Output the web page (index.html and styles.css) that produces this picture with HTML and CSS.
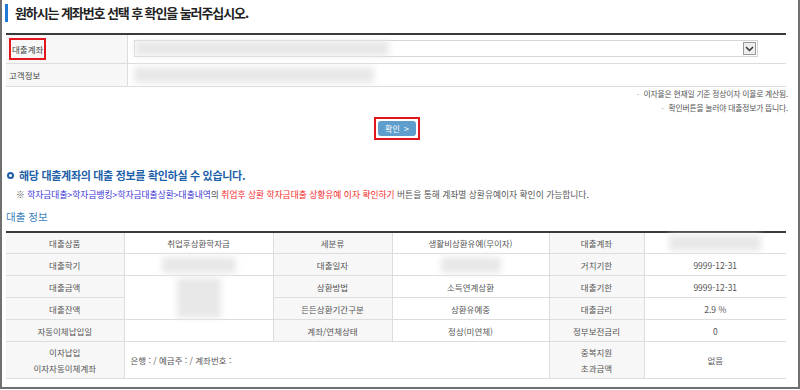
FILE: index.html
```html
<!DOCTYPE html>
<html lang="ko">
<head>
  <meta charset="UTF-8">
  <title>대출 정보 조회</title>
  <link rel="stylesheet" href="styles.css">
</head>
<body>
  <div class="frame">
    <h2 class="page-title">원하시는 계좌번호 선택 후 확인을 눌러주십시오.</h2>

    <!-- 계좌 선택 -->
    <table class="form-table">
      <tr class="row-account">
        <th><span class="mark">대출계좌</span></th>
        <td>
          <div class="select-box">
            <div class="blur blur-select"></div>
            <div class="select-arrow">
              <svg width="9" height="6" viewBox="0 0 9 6"><path d="M1 1 L4.5 4.5 L8 1" fill="none" stroke="#333" stroke-width="1.5"/></svg>
            </div>
          </div>
        </td>
      </tr>
      <tr class="row-customer">
        <th>고객정보</th>
        <td><div class="blur blur-customer"></div></td>
      </tr>
    </table>

    <ul class="notes">
      <li>이자율은 현재일 기준 정상이자 이율로 계산됨.</li>
      <li>확인버튼을 눌러야 대출정보가 뜹니다.</li>
    </ul>

    <div class="btn-wrap">
      <span class="mark-btn"><button class="btn-ok">확인 <span class="arr">&gt;</span></button></span>
    </div>

    <h3 class="sub-title"><span class="ring"></span>해당 대출계좌의 대출 정보를 확인하실 수 있습니다.</h3>
    <p class="guide">※ <span class="c-blue">학자금대출&gt;학자금뱅킹&gt;학자금대출상환&gt;대출내역</span>의 <span class="c-red">취업후 상환 학자금대출 상황유예 이자 확인하기</span> 버튼을 통해 계좌별 상환유예이자 확인이 가능합니다.</p>

    <h4 class="info-title">대출 정보</h4>
    <table class="info-table">
      <colgroup>
        <col class="c1"><col class="c2"><col class="c3"><col class="c4"><col class="c5"><col class="c6">
      </colgroup>
      <tr>
        <th>대출상품</th><td>취업후상환학자금</td>
        <th>세분류</th><td>생활비상환유예(무이자)</td>
        <th>대출계좌</th><td><div class="blur blur-acct"></div></td>
      </tr>
      <tr>
        <th>대출학기</th><td><div class="blur blur-term"></div></td>
        <th>대출일자</th><td><div class="blur blur-date"></div></td>
        <th>거치기한</th><td>9999-12-31</td>
      </tr>
      <tr>
        <th>대출금액</th><td rowspan="2"><div class="blur blur-amt"></div></td>
        <th>상환방법</th><td>소득연계상환</td>
        <th>대출기한</th><td>9999-12-31</td>
      </tr>
      <tr>
        <th>대출잔액</th>
        <th>든든상환기간구분</th><td>상환유예중</td>
        <th>대출금리</th><td>2.9 %</td>
      </tr>
      <tr>
        <th>자동이체납입일</th><td></td>
        <th>계좌/연체상태</th><td>정상(미연체)</td>
        <th>정부보전금리</th><td>0</td>
      </tr>
      <tr class="row-tall">
        <th>이자납입<br>이자자동이체계좌</th>
        <td colspan="3" class="left">은행 : / 예금주 : / 계좌번호 :</td>
        <th>중복지원<br>초과금액</th><td>없음</td>
      </tr>
    </table>
  </div>
</body>
</html>
```

FILE: styles.css
```css
body {
  margin: 0;
  font-family: "Noto Sans CJK KR", "Noto Sans", sans-serif;
  color: #555;
}
.frame {
  width: 800px;
  height: 389px;
  box-sizing: border-box;
  padding: 4px 12px 0 4px;
  border: 2px solid #707070;
  border-top: none;
  overflow: hidden;
}
.page-title {
  margin: 0 0 0 -1px;
  height: 18px;
  padding-left: 7px;
  border-left: 3px solid #1f7ad6;
  font-size: 13px;
  line-height: 18px;
  font-weight: bold;
  color: #222;
  letter-spacing: -1.1px;
}
.form-table,
.info-table {
  width: 780px;
  border-collapse: collapse;
  font-size: 8.5px;
}
.form-table {
  margin-top: 11px;
  border-top: 2px solid #3a3a3a;
}
.form-table th {
  width: 118px;
  padding: 0 0 0 3px;
  text-align: left;
  font-weight: normal;
  background: #f7f7f7;
  color: #444;
  border-right: 1px solid #ddd;
}
.form-table th,
.form-table td {
  border-bottom: 1px solid #ddd;
}
.form-table td {
  padding: 0 0 0 6px;
}
.row-account {
  height: 29px;
}
.row-customer {
  height: 23px;
}
.mark {
  display: inline-block;
  padding: 3px 1px;
  border: 2px solid #e3161d;
}
.select-box {
  display: flex;
  align-items: center;
  justify-content: space-between;
  width: 622px;
  height: 15px;
  border: 1px solid #d6d6d6;
  background: #fff;
}
.select-arrow {
  display: flex;
  align-items: center;
  justify-content: center;
  width: 11px;
  height: 11px;
  margin-right: 1px;
  border: 1px solid #999;
  background: #eee;
}
.blur {
  background: #e8e8e8;
  filter: blur(3px);
}
.blur-select {
  width: 254px;
  height: 15px;
}
.blur-customer {
  width: 240px;
  height: 16px;
}
.notes {
  list-style: none;
  margin: 0 -2px 0 0;
  padding: 0;
  text-align: right;
  font-size: 7.8px;
  line-height: 14px;
  color: #555;
  letter-spacing: -0.2px;
}
.notes li:before {
  content: "·";
  margin-right: 5px;
  color: #888;
}
.btn-wrap {
  display: flex;
  justify-content: center;
  margin-top: 2px;
}
.mark-btn {
  display: block;
  padding: 2px;
  border: 2px solid #e3161d;
  margin-left: 2px;
}
.btn-ok {
  display: block;
  width: 38px;
  height: 15px;
  padding: 0;
  border: none;
  border-radius: 3px;
  background: #5f9dcd;
  color: #fff;
  font-family: inherit;
  font-size: 8px;
  line-height: 15px;
}
.btn-ok .arr {
  margin-left: 2px;
  font-size: 9px;
}
.sub-title {
  margin: 27px 0 0 0;
  display: flex;
  align-items: center;
  font-size: 11px;
  line-height: 16px;
  color: #1e5fa9;
  font-weight: bold;
  letter-spacing: -0.3px;
}
.ring {
  width: 3px;
  height: 3px;
  margin: 2px 5px 0 1px;
  border: 2px solid #1e5fa9;
  border-radius: 50%;
}
.guide {
  margin: 5px 0 0 10px;
  font-size: 8.75px;
  line-height: 14px;
  color: #555;
}
.c-blue {
  color: #3d35d6;
}
.c-red {
  color: #f42a2a;
}
.info-title {
  margin: 8px 0 0 0;
  font-size: 10.5px;
  line-height: 14px;
  font-weight: normal;
  color: #3b7fbd;
}
.info-table {
  margin-top: 7px;
  border-top: 2px solid #3a3a3a;
  table-layout: fixed;
}
.c1 { width: 118px; }
.c2 { width: 149px; }
.c3 { width: 119px; }
.c4 { width: 157px; }
.c5 { width: 95px; }
.c6 { width: 142px; }
.info-table tr {
  height: 22px;
}
.info-table th,
.info-table td {
  padding: 0;
  border: 1px solid #ddd;
  text-align: center;
  color: #555;
}
.info-table tr > :first-child {
  border-left: none;
}
.info-table tr > :last-child {
  border-right: none;
}
.info-table th {
  font-weight: normal;
  background: #f7f7f7;
}
.info-table .row-tall {
  height: 37px;
}
.row-tall th {
  line-height: 16px;
}
.info-table td.left {
  text-align: left;
  padding-left: 6px;
}
.blur-acct {
  width: 92px;
  height: 16px;
  margin: 0 auto;
}
.blur-term {
  width: 74px;
  height: 16px;
  margin: 0 auto;
}
.blur-date {
  width: 60px;
  height: 16px;
  margin: 0 auto;
}
.blur-amt {
  width: 44px;
  height: 40px;
  margin: 0 auto;
}
```
